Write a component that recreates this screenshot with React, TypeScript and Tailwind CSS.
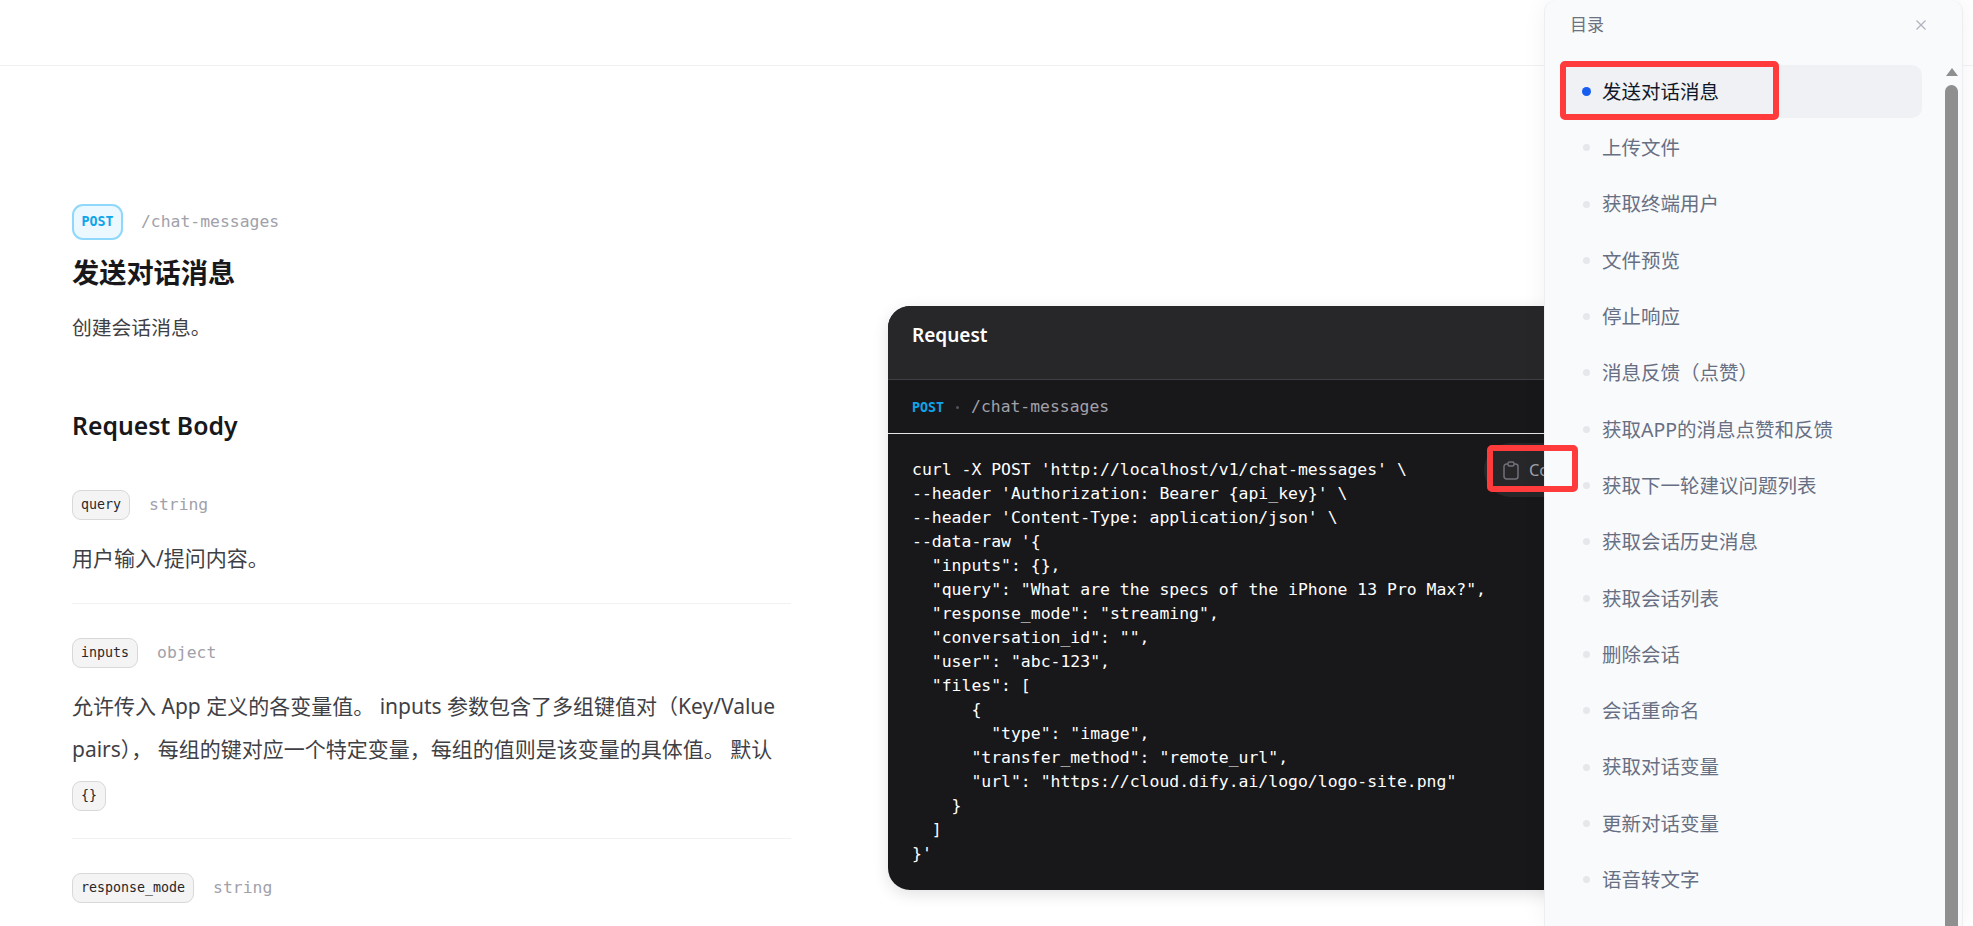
import React from "react";

const MONO = "font-['DejaVu_Sans_Mono',monospace]";
const SANS = "font-['Noto_Sans','Noto_Sans_CJK_SC',sans-serif]";

const tocItems = [
  "上传文件",
  "获取终端用户",
  "文件预览",
  "停止响应",
  "消息反馈（点赞）",
  "获取APP的消息点赞和反馈",
  "获取下一轮建议问题列表",
  "获取会话历史消息",
  "获取会话列表",
  "删除会话",
  "会话重命名",
  "获取对话变量",
  "更新对话变量",
  "语音转文字",
];

const code = `curl -X POST 'http://localhost/v1/chat-messages' \\
--header 'Authorization: Bearer {api_key}' \\
--header 'Content-Type: application/json' \\
--data-raw '{
  "inputs": {},
  "query": "What are the specs of the iPhone 13 Pro Max?",
  "response_mode": "streaming",
  "conversation_id": "",
  "user": "abc-123",
  "files": [
      {
        "type": "image",
      "transfer_method": "remote_url",
      "url": "https://cloud.dify.ai/logo/logo-site.png"
    }
  ]
}'`;

function Tag({ children }: { children: React.ReactNode }) {
  return (
    <code className={`inline-block h-[30px] rounded-[9px] border border-[#d8d8db] bg-[#f4f4f5] px-[8px] text-[13.3px] leading-[28px] text-[#27272a] ${MONO}`}>
      {children}
    </code>
  );
}

function Param({ name, type }: { name: string; type: string }) {
  return (
    <div className="flex h-[30px] items-center gap-[19px]">
      <Tag>{name}</Tag>
      <span className={`text-[16.4px] text-[#a1a1aa] ${MONO}`}>{type}</span>
    </div>
  );
}

export default function App() {
  return (
    <div className={`relative h-[926px] w-full overflow-hidden bg-white ${SANS}`}>
      <header className="h-[66px] border-b border-[#f1f1f3]" />
      <main className="flex items-start">
        <section className="ml-[72px] w-[719px] shrink-0 pt-[138px]">
          <div className="flex h-[36px] items-center gap-[18px]">
            <span className={`flex h-[36px] w-[51px] items-center justify-center rounded-[11px] border-2 border-[#8fd8fc] bg-[#ecf8ff] text-[13.3px] font-bold text-[#0ea5e9] ${MONO}`}>
              POST
            </span>
            <span className={`pt-[1px] text-[16.4px] text-[#a1a1aa] ${MONO}`}>/chat-messages</span>
          </div>
          <h1 className="mt-[14px] text-[27.2px] font-bold leading-[38px] text-[#18181b]">发送对话消息</h1>
          <p className="mt-[19px] text-[19.8px] leading-[33px] text-[#3f3f46]">创建会话消息。</p>
          <h2 className="mt-[64px] text-[24.75px] font-semibold leading-[36px] text-[#18181b]">Request Body</h2>
          <div className="mt-[46px]">
            <Param name="query" type="string" />
            <p className="mt-[22px] text-[21px] leading-[33px] text-[#3f3f46]">用户输入/提问内容。</p>
          </div>
          <div className="mt-[28px] border-t border-[#f1f1f3] pt-[34px]">
            <Param name="inputs" type="object" />
            <p className="mt-[17px] text-[21px] leading-[43px] text-[#3f3f46]">
              允许传入 App 定义的各变量值。 inputs 参数包含了多组键值对（Key/Value pairs）， 每组的键对应一个特定变量，每组的值则是该变量的具体值。 默认 <Tag>{"{}"}</Tag>
            </p>
          </div>
          <div className="mt-[24px] border-t border-[#f1f1f3] pt-[34px]">
            <Param name="response_mode" type="string" />
          </div>
        </section>
        <section className="relative ml-[97px] mt-[240px] w-[1000px] shrink-0 overflow-hidden rounded-[22px] bg-[#18181b] shadow-[0_4px_16px_rgba(0,0,0,0.12)]">
          <div className="h-[74px] border-b border-[#3f3f46] bg-[#27272a] px-[24px] pt-[15px]">
            <h3 className="text-[19px] font-semibold leading-[28px] text-white">Request</h3>
          </div>
          <div className={`flex h-[54px] items-center border-b border-[#e4e4e7] px-[24px] pt-[2px] text-[16.4px] ${MONO}`}>
            <span className="text-[13.3px] font-bold text-[#0ea5e9]">POST</span>
            <span className="mx-[12px] h-[3px] w-[3px] rounded-full bg-[#52525b]" />
            <span className="text-[#a1a1aa]">/chat-messages</span>
          </div>
          <div className="relative px-[24px] pb-[24px] pt-[24px]">
            <pre className={`text-[16.45px] leading-[24px] text-white ${MONO}`}>{code}</pre>
            <div className="absolute left-[596px] top-[9px] flex h-[54px] w-[200px] items-center gap-[10px] rounded-full bg-[#27272a] pl-[19px] text-[16.4px] text-[#a1a1aa]">
              <svg width="16" height="19" viewBox="0 0 16 19" fill="none" stroke="#71717a" strokeWidth="1.5">
                <path d="M5 3H3.5A2.5 2.5 0 0 0 1 5.500V15.500A2.500 2.500 0 0 0 3.500 18H12.500A2.500 2.500 0 0 0 15 15.500V5.500A2.500 2.500 0 0 0 12.500 3H11" />
                <rect x="5" y="1" width="6" height="4" rx="1.500" />
              </svg>
              <span>Copy</span>
            </div>
          </div>
        </section>
      </main>

      <aside className="absolute right-[10px] top-0 flex h-[926px] w-[419px] flex-col rounded-t-[12px] border-x border-[#eeeef1] bg-[#f9fafc] shadow-[0_0_24px_rgba(0,0,0,0.05)]">
        <div className="flex h-[50px] shrink-0 items-center justify-between pl-[25px] pr-[35px]">
          <span className="text-[17px] text-[#6b7280]">目录</span>
          <svg width="12" height="12" viewBox="0 0 12 12" stroke="#b0b4bc" strokeWidth="1.3">
            <path d="M1.500 1.500l9 9M10.500 1.500l-9 9" />
          </svg>
        </div>
        <div className="flex min-h-0 flex-1">
          <nav className="ml-[16px] mr-[17px] w-[361px] pt-[15px]">
            <div className="flex h-[53px] items-center rounded-[10px] bg-[#f0f1f5] pl-[21px] text-[19.5px] text-[#101828]">
              <span className="mr-[11px] h-[9px] w-[9px] rounded-full bg-[#155eef]" />
              发送对话消息
            </div>
            {tocItems.map((t) => (
              <div key={t} className="mt-[3.3px] flex h-[53px] items-center pl-[22px] text-[19.5px] text-[#676f83]">
                <span className="mr-[12px] h-[7px] w-[7px] rounded-full bg-[#e5e7eb]" />
                {t}
              </div>
            ))}
          </nav>
          <div className="flex flex-1 justify-end pr-[4px]">
            <div className="flex w-[13px] flex-col items-center">
              <svg width="12" height="8" viewBox="0 0 12 8" className="mt-[18px]"><path d="M6 0l6 8H0z" fill="#8f8f8f" /></svg>
              <div className="mt-[9px] w-full flex-1 rounded-t-full bg-[#8f8f8f]" />
            </div>
          </div>
        </div>
      </aside>
      <div className="absolute left-[1560px] top-[61px] h-[59px] w-[219px] rounded-[5px] border-[6px] border-[#ff3b3b]" />
      <div className="absolute left-[1487px] top-[445px] h-[47px] w-[91px] rounded-[5px] border-[6px] border-[#ff3b3b]" />
    </div>
  );
}
